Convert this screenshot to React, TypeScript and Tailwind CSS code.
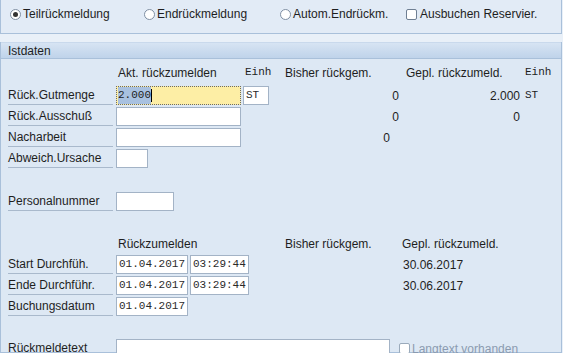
import React from 'react';

const font = "font-['Liberation_Sans',Arial,sans-serif]";
const mono = "font-['Liberation_Mono','Courier_New',monospace]";

const Label: React.FC<{ text: string }> = ({ text }) => (
  <div className="ml-[7px] w-[105px] h-[19px] flex items-center border-b border-[#a9b9cc] text-[#1e1e1e]">
    {text}
  </div>
);

const Field: React.FC<{ w: string; value?: string; className?: string }> = ({ w, value, className }) => (
  <div
    className={`${w} h-[19px] bg-white border border-[#a3b3c6] flex items-center px-[2px] text-[11px] text-[#2a2a2a] ${mono} ${className ?? ''}`}
  >
    {value}
  </div>
);

const Radio: React.FC<{ checked?: boolean }> = ({ checked }) => (
  <div className="w-[11px] h-[11px] rounded-full border border-[#7f8fa3] bg-white flex items-center justify-center">
    {checked && <div className="w-[5px] h-[5px] rounded-full bg-[#333]" />}
  </div>
);

const Check: React.FC<{ dim?: boolean }> = ({ dim }) => (
  <div className={`w-[11px] h-[11px] border bg-white rounded-[2px] ${dim ? 'border-[#9aaabb]' : 'border-[#6f7f93]'}`} />
);

const App: React.FC = () => {
  return (
    <div className={`w-[563px] h-[353px] overflow-hidden bg-[#e9f0f8] text-[12px] ${font}`}>
      {/* Rückmeldungsart */}
      <div className="h-[34px] bg-[#e2ebf6] border-l border-b border-r border-[#a9c0da] mr-[1px] flex items-start pt-[5px] text-[#1e1e1e]">
        <div className="flex items-center ml-[9px] w-[134px] gap-[2px]">
          <Radio checked />
          <span>Teilrückmeldung</span>
        </div>
        <div className="flex items-center w-[136px] gap-[2px]">
          <Radio />
          <span>Endrückmeldung</span>
        </div>
        <div className="flex items-center w-[126px] gap-[2px]">
          <Radio />
          <span>Autom.Endrückm.</span>
        </div>
        <div className="flex items-center gap-[3px]">
          <Check />
          <span>Ausbuchen Reservier.</span>
        </div>
      </div>

      <div className="h-[8px]" />

      {/* Istdaten */}
      <div className="mr-[1px] border-l border-r border-b border-[#a9c0da] bg-[#dde8f4] h-[311px]">
        <div className="h-[17px] bg-gradient-to-b from-[#d7e4f3] to-[#bfd3ea] border-t border-[#c9d9ec] border-b border-b-[#a9c0da] flex items-center pl-[7px] text-[#1e1e1e]">
          Istdaten
        </div>

        <div className="pt-[3px] text-[#1e1e1e]">
          {/* Header row */}
          <div className="h-[21px] flex items-center">
            <div className="w-[117px]" />
            <div className="w-[127px]">Akt. rückzumelden</div>
            <div className={`w-[40px] text-[11px] ${mono}`}>Einh</div>
            <div className="w-[121px]">Bisher rückgem.</div>
            <div className="w-[119px]">Gepl. rückzumeld.</div>
            <div className={`text-[11px] ${mono}`}>Einh</div>
          </div>
          <div className="h-[2px]" />

          {/* Rück.Gutmenge */}
          <div className="h-[21px] flex items-center">
            <Label text="Rück.Gutmenge" />
            <div className="ml-[3px] w-[125px] h-[19px] bg-[#fdeea5] border border-dotted border-[#6a6a6a] flex items-center px-[1px]">
              <span className={`text-[11px] bg-[#a8c1e0] text-[#1e1e1e] ${mono}`}>2.000</span>
              <span className="w-[1px] h-[13px] bg-black" />
            </div>
            <Field w="w-[26px]" value="ST" className="ml-[2px]" />
            <div className="w-[130px] text-right">0</div>
            <div className="w-[121px] text-right">2.000</div>
            <div className={`ml-[5px] text-[11px] ${mono}`}>ST</div>
          </div>

          {/* Rück.Ausschuß */}
          <div className="h-[21px] flex items-center">
            <Label text="Rück.Ausschuß" />
            <Field w="w-[125px]" className="ml-[3px]" />
            <div className="w-[158px] text-right">0</div>
            <div className="w-[121px] text-right">0</div>
          </div>

          {/* Nacharbeit */}
          <div className="h-[21px] flex items-center">
            <Label text="Nacharbeit" />
            <Field w="w-[125px]" className="ml-[3px]" />
            <div className="w-[149px] text-right">0</div>
          </div>

          {/* Abweich.Ursache */}
          <div className="h-[21px] flex items-center">
            <Label text="Abweich.Ursache" />
            <Field w="w-[32px]" className="ml-[3px]" />
          </div>

          <div className="h-[22px]" />

          <div className="h-[21px] flex items-center">
            <Label text="Personalnummer" />
            <Field w="w-[58px]" className="ml-[3px]" />
          </div>

          <div className="h-[21px]" />

          {/* Termine header */}
          <div className="h-[21px] flex items-center">
            <div className="w-[117px]" />
            <div className="w-[167px]">Rückzumelden</div>
            <div className="w-[117px]">Bisher rückgem.</div>
            <div>Gepl. rückzumeld.</div>
          </div>

          <div className="h-[21px] flex items-center">
            <Label text="Start Durchfüh." />
            <Field w="w-[72px]" value="01.04.2017" className="ml-[3px]" />
            <Field w="w-[59px]" value="03:29:44" className="ml-[2px]" />
            <div className="ml-[154px]">30.06.2017</div>
          </div>

          <div className="h-[21px] flex items-center">
            <Label text="Ende Durchführ." />
            <Field w="w-[72px]" value="01.04.2017" className="ml-[3px]" />
            <Field w="w-[59px]" value="03:29:44" className="ml-[2px]" />
            <div className="ml-[154px]">30.06.2017</div>
          </div>

          <div className="h-[21px] flex items-center">
            <Label text="Buchungsdatum" />
            <Field w="w-[72px]" value="01.04.2017" className="ml-[3px]" />
          </div>

          <div className="h-[21px]" />

          <div className="h-[21px] flex items-center">
            <Label text="Rückmeldetext" />
            <Field w="w-[274px]" className="ml-[3px]" />
            <div className="ml-[9px] flex items-center gap-[2px] text-[#8b9bb0]">
              <Check dim />
              <span>Langtext vorhanden</span>
            </div>
          </div>
        </div>
      </div>
    </div>
  );
};

export default App;
